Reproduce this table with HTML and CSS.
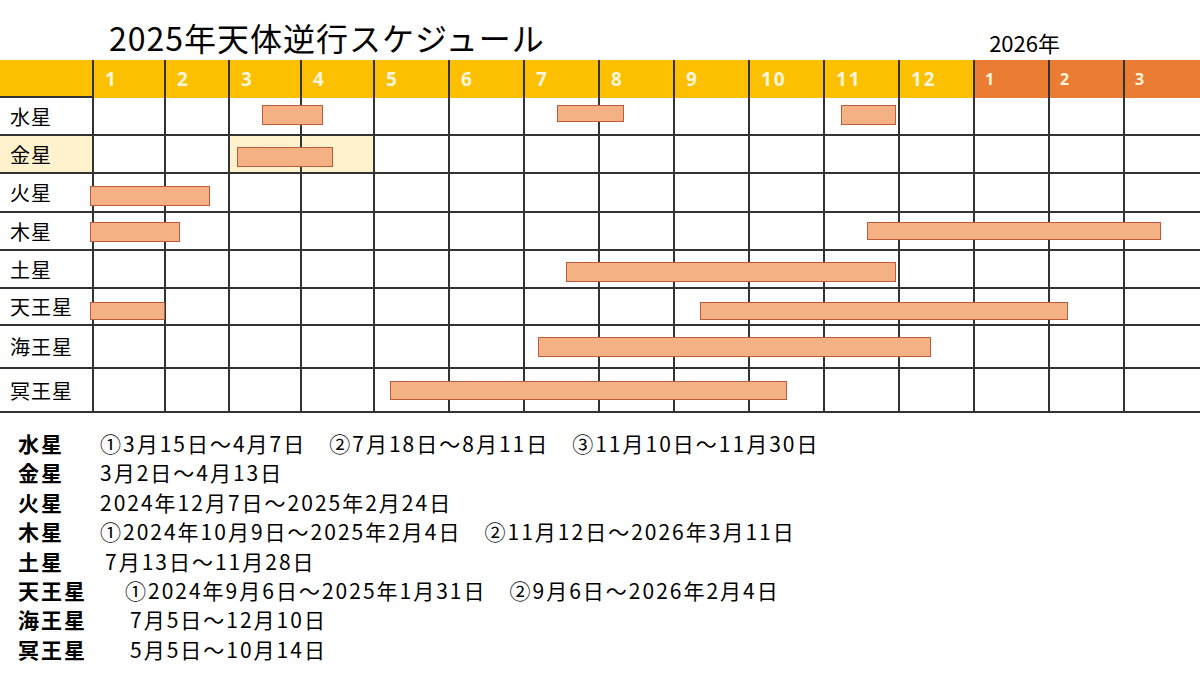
FILE: index.html
```html
<!DOCTYPE html>
<html lang="ja">
<head>
<meta charset="utf-8">
<title>2025年天体逆行スケジュール</title>
<link rel="stylesheet" href="styles.css">
</head>
<body>
<div class="page">
  <header class="top">
    <h1 class="title">2025年天体逆行スケジュール</h1>
    <div class="next-year">2026年</div>
  </header>

  <section class="chart">
    <div class="head">
      <div class="hcell corner"></div>
      <div class="hcell">1</div>
      <div class="hcell">2</div>
      <div class="hcell">3</div>
      <div class="hcell">4</div>
      <div class="hcell">5</div>
      <div class="hcell">6</div>
      <div class="hcell">7</div>
      <div class="hcell">8</div>
      <div class="hcell">9</div>
      <div class="hcell">10</div>
      <div class="hcell">11</div>
      <div class="hcell">12</div>
      <div class="hcell ny">1</div>
      <div class="hcell ny">2</div>
      <div class="hcell ny">3</div>
    </div>

    <div class="row r-mercury">
      <div class="cell label">水星</div>
      <div class="cell"></div><div class="cell"></div><div class="cell"></div><div class="cell"></div><div class="cell"></div>
      <div class="cell"></div><div class="cell"></div><div class="cell"></div><div class="cell"></div><div class="cell"></div>
      <div class="cell"></div><div class="cell"></div><div class="cell"></div><div class="cell"></div><div class="cell"></div>
      <div class="bar" style="left:262px;width:61px"></div>
      <div class="bar short" style="left:557px;width:67px"></div>
      <div class="bar" style="left:841px;width:55px"></div>
    </div>

    <div class="row r-venus">
      <div class="cell label hl">金星</div>
      <div class="cell"></div><div class="cell"></div><div class="cell hl"></div><div class="cell hl"></div><div class="cell"></div>
      <div class="cell"></div><div class="cell"></div><div class="cell"></div><div class="cell"></div><div class="cell"></div>
      <div class="cell"></div><div class="cell"></div><div class="cell"></div><div class="cell"></div><div class="cell"></div>
      <div class="bar" style="left:237px;width:96px"></div>
    </div>

    <div class="row r-mars">
      <div class="cell label">火星</div>
      <div class="cell"></div><div class="cell"></div><div class="cell"></div><div class="cell"></div><div class="cell"></div>
      <div class="cell"></div><div class="cell"></div><div class="cell"></div><div class="cell"></div><div class="cell"></div>
      <div class="cell"></div><div class="cell"></div><div class="cell"></div><div class="cell"></div><div class="cell"></div>
      <div class="bar" style="left:90px;width:120px"></div>
    </div>

    <div class="row r-jupiter">
      <div class="cell label">木星</div>
      <div class="cell"></div><div class="cell"></div><div class="cell"></div><div class="cell"></div><div class="cell"></div>
      <div class="cell"></div><div class="cell"></div><div class="cell"></div><div class="cell"></div><div class="cell"></div>
      <div class="cell"></div><div class="cell"></div><div class="cell"></div><div class="cell"></div><div class="cell"></div>
      <div class="bar" style="left:90px;width:90px"></div>
      <div class="bar short" style="left:867px;width:294px"></div>
    </div>

    <div class="row r-saturn">
      <div class="cell label">土星</div>
      <div class="cell"></div><div class="cell"></div><div class="cell"></div><div class="cell"></div><div class="cell"></div>
      <div class="cell"></div><div class="cell"></div><div class="cell"></div><div class="cell"></div><div class="cell"></div>
      <div class="cell"></div><div class="cell"></div><div class="cell"></div><div class="cell"></div><div class="cell"></div>
      <div class="bar" style="left:566px;width:330px"></div>
    </div>

    <div class="row r-uranus">
      <div class="cell label">天王星</div>
      <div class="cell"></div><div class="cell"></div><div class="cell"></div><div class="cell"></div><div class="cell"></div>
      <div class="cell"></div><div class="cell"></div><div class="cell"></div><div class="cell"></div><div class="cell"></div>
      <div class="cell"></div><div class="cell"></div><div class="cell"></div><div class="cell"></div><div class="cell"></div>
      <div class="bar" style="left:90px;width:75px"></div>
      <div class="bar" style="left:700px;width:368px"></div>
    </div>

    <div class="row r-neptune">
      <div class="cell label">海王星</div>
      <div class="cell"></div><div class="cell"></div><div class="cell"></div><div class="cell"></div><div class="cell"></div>
      <div class="cell"></div><div class="cell"></div><div class="cell"></div><div class="cell"></div><div class="cell"></div>
      <div class="cell"></div><div class="cell"></div><div class="cell"></div><div class="cell"></div><div class="cell"></div>
      <div class="bar" style="left:538px;width:393px"></div>
    </div>

    <div class="row r-pluto">
      <div class="cell label">冥王星</div>
      <div class="cell"></div><div class="cell"></div><div class="cell"></div><div class="cell"></div><div class="cell"></div>
      <div class="cell"></div><div class="cell"></div><div class="cell"></div><div class="cell"></div><div class="cell"></div>
      <div class="cell"></div><div class="cell"></div><div class="cell"></div><div class="cell"></div><div class="cell"></div>
      <div class="bar" style="left:390px;width:397px"></div>
    </div>
  </section>

  <section class="notes">
    <p class="line"><span class="name">水星</span><span class="dates">①3月15日～4月7日　②7月18日～8月11日　③11月10日～11月30日</span></p>
    <p class="line"><span class="name">金星</span><span class="dates">3月2日～4月13日</span></p>
    <p class="line"><span class="name">火星</span><span class="dates">2024年12月7日～2025年2月24日</span></p>
    <p class="line"><span class="name">木星</span><span class="dates">①2024年10月9日～2025年2月4日　②11月12日～2026年3月11日</span></p>
    <p class="line"><span class="name w87">土星</span><span class="dates">7月13日～11月28日</span></p>
    <p class="line"><span class="name w107">天王星</span><span class="dates">①2024年9月6日～2025年1月31日　②9月6日～2026年2月4日</span></p>
    <p class="line"><span class="name w112">海王星</span><span class="dates">7月5日～12月10日</span></p>
    <p class="line"><span class="name w112">冥王星</span><span class="dates">5月5日～10月14日</span></p>
  </section>
</div>
</body>
</html>
```

FILE: styles.css
```css
* {
  box-sizing: border-box;
}

html, body {
  margin: 0;
  padding: 0;
  background: #ffffff;
}

body {
  font-family: "Noto Sans CJK JP", "Noto Sans", sans-serif;
  color: #000000;
}

.page {
  width: 1200px;
  height: 675px;
  overflow: hidden;
  background: #ffffff;
}

/* ---------- title ---------- */
.top {
  height: 60px;
  display: flex;
  align-items: flex-end;
  padding-bottom: 7px;
}

.title {
  margin: 0 0 0 109px;
  font-size: 32px;
  line-height: 32px;
  font-weight: 400;
  letter-spacing: 1px;
  white-space: nowrap;
}

.next-year {
  margin-left: auto;
  margin-right: 140px;
  font-size: 22px;
  line-height: 22px;
  white-space: nowrap;
}

/* ---------- chart ---------- */
.chart {
  width: 1200px;
}

.head,
.row {
  display: grid;
  grid-template-columns: 94px 72px 64px 72px 73px repeat(11, 75px);
}

.head {
  height: 38px;
  background: #fcc000;
}

.hcell {
  border-right: 2px solid #333333;
  display: flex;
  align-items: center;
  padding-left: 11px;
  font-family: "Open Sans", "Noto Sans", sans-serif;
  font-weight: 700;
  font-size: 19px;
  letter-spacing: 2px;
  color: #fff6dc;
}

.hcell:last-child {
  border-right: none;
}

.hcell.corner {
  border-bottom: 2px solid #333333;
}

.hcell.ny {
  background: #ea7d33;
  font-size: 16px;
  padding-left: 10px;
}

.row {
  position: relative;
  border-bottom: 2px solid #333333;
  height: 38px;
}

.r-mars { height: 39px; }
.r-uranus { height: 37px; }
.r-neptune { height: 43px; }
.r-pluto { height: 44px; }

.cell {
  border-right: 2px solid #333333;
}

.cell:nth-child(16) {
  border-right: none;
}

.cell.hl {
  background: #fff2cc;
}

.cell.label {
  display: flex;
  align-items: center;
  padding-left: 10px;
  font-size: 20px;
  letter-spacing: 1px;
  white-space: nowrap;
}

.bar {
  position: absolute;
  top: 11px;
  height: 20px;
  background: #f4b183;
  border: 1px solid #bf5a3c;
}

.r-mercury .bar { top: 7px; }
.r-mercury .bar.short { height: 17px; }
.r-jupiter .bar { top: 9px; }
.r-jupiter .bar.short { height: 18px; }
.r-mars .bar { top: 12px; }
.r-uranus .bar { top: 13px; height: 18px; }
.r-pluto .bar { top: 12px; height: 19px; }

/* ---------- notes ---------- */
.notes {
  padding: 16px 0 0 18px;
}

.line {
  margin: 0;
  height: 29.4px;
  line-height: 29.4px;
  font-size: 21px;
  letter-spacing: 2px;
  white-space: nowrap;
}

.name {
  display: inline-block;
  width: 82px;
  font-weight: 700;
}

.name.w87 { width: 87px; }
.name.w107 { width: 107px; }
.name.w112 { width: 112px; }

.dates {
  font-weight: 400;
}
```
